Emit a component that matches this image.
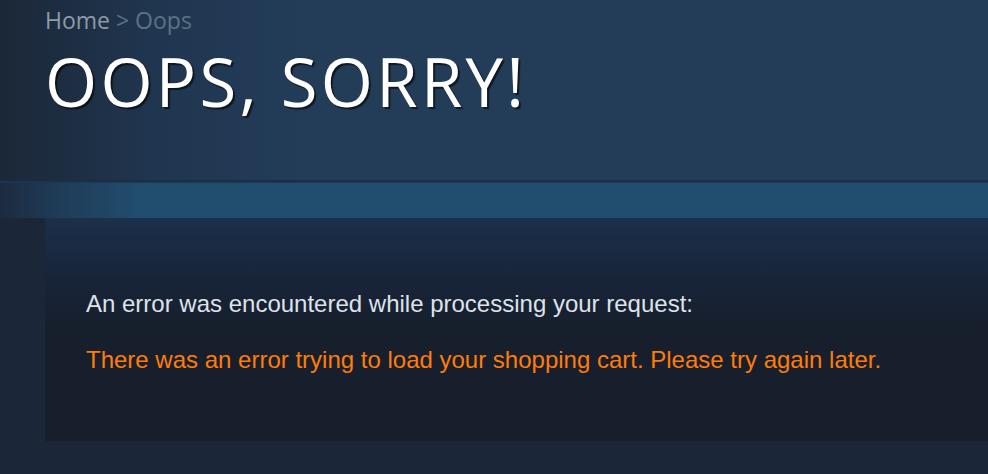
export default function App() {
  return (
    <div className="w-full h-[474px] overflow-hidden bg-[#1b2738]">
      <header className="h-[180px] pl-[45px] bg-[linear-gradient(90deg,#1b2838_0px,#203650_160px,#233d59_320px,#233d59_100%)]">
        <div className="pt-[5px] text-[23px] leading-[30px] font-['Open_Sans',sans-serif] text-[#8e9aa5]">
          Home <span className="text-[#5a7385]">&gt; Oops</span>
        </div>
        <h1 className="mt-[8px] text-[67px] leading-[76px] font-normal tracking-[3.3px] text-white font-['Open_Sans',sans-serif] [text-shadow:2px_2px_1px_rgba(0,0,0,0.6)]">
          OOPS, SORRY!
        </h1>
      </header>
      <div className="h-[3px] bg-[linear-gradient(180deg,#192a3c,#1e3a55)]" />
      <div className="h-[35px] bg-[linear-gradient(90deg,#1c2b3f_0px,#1f3c58_60px,#214d6e_140px,#214d6e_100%)]" />
      <section className="ml-[45px] h-[223px] pl-[41px] pt-[72px] bg-[linear-gradient(180deg,#1b3049_0px,#18243a_60px,#171f2c_110px,#171f2c_100%)] font-['Liberation_Sans',Arial,sans-serif] text-[24px] leading-[28px]">
        <p className="text-[#dde3e8]">An error was encountered while processing your request:</p>
        <p className="mt-[28px] text-[#ff7b0a]">
          There was an error trying to load your shopping cart. Please try again later.
        </p>
      </section>
    </div>
  );
}
